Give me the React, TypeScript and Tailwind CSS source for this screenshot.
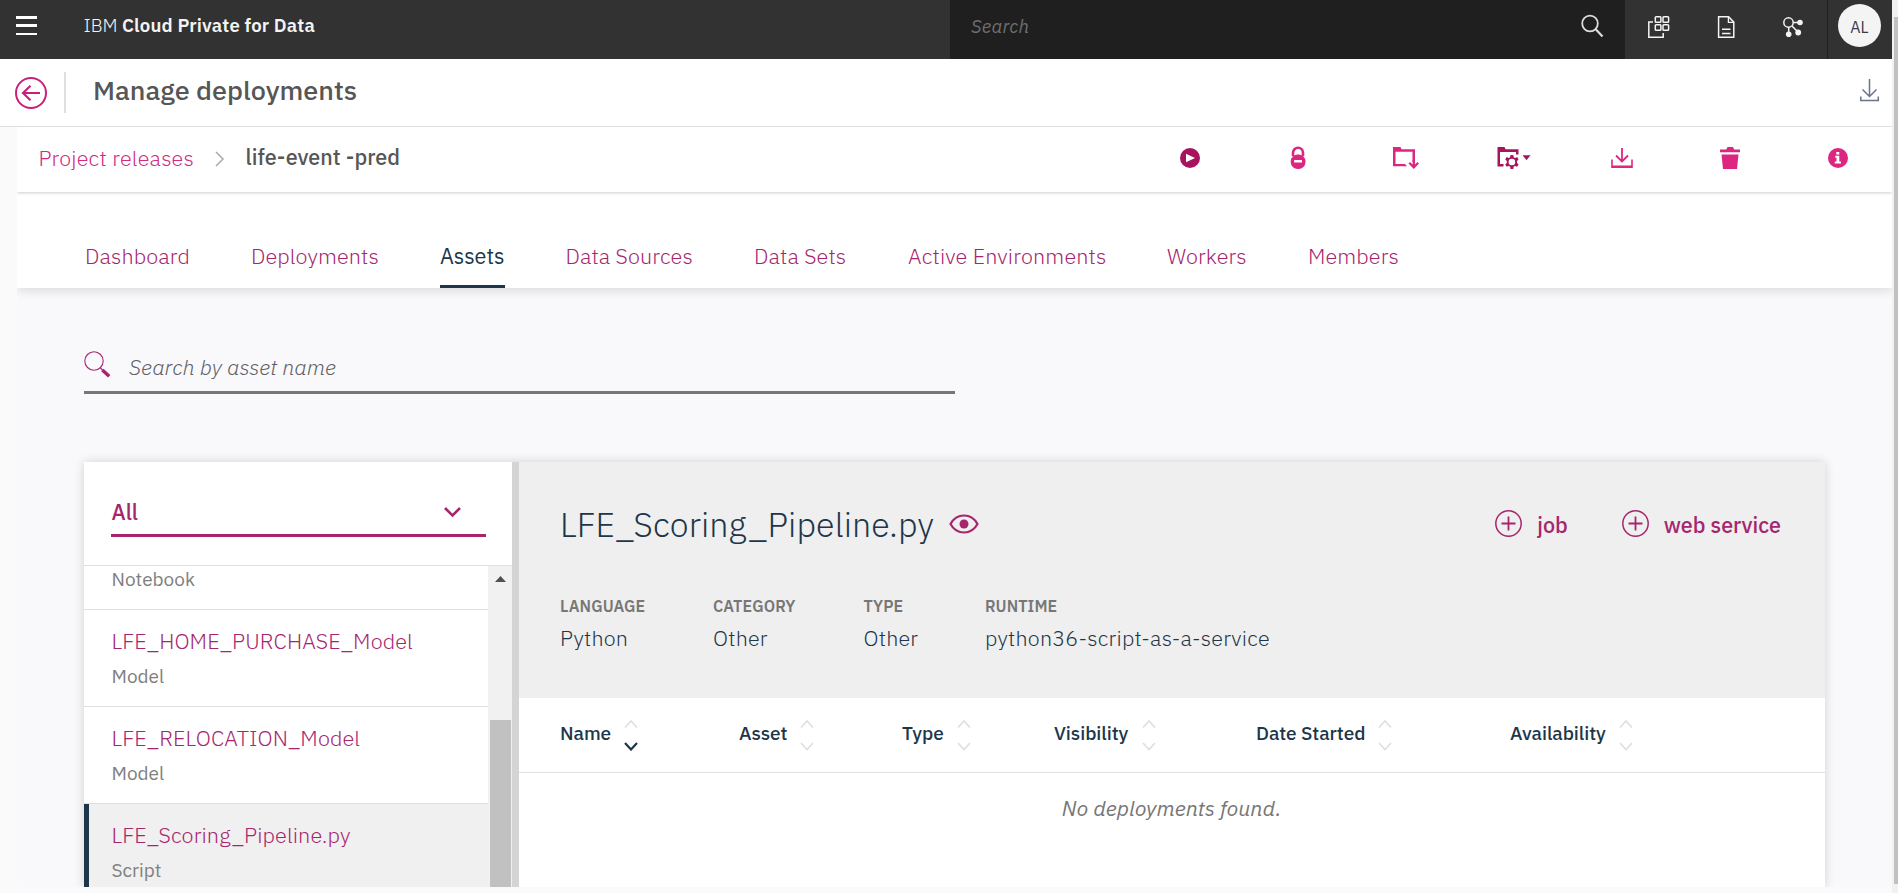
import React from "react";

const sans = "font-['IBM_Plex_Sans','Roboto',sans-serif]";

type TextSpec = { label: string; className: string };

const tabs: TextSpec[] = [
  { label: "Dashboard", className: "w-[105px] tracking-[0.1px]" },
  { label: "Deployments", className: "w-[128px] tracking-[0.1px]" },
  { label: "Assets", className: "w-[64.5px] tracking-[-0.05px]" },
  { label: "Data Sources", className: "w-[127.5px] tracking-[0.1px]" },
  { label: "Data Sets", className: "w-[93px] tracking-[0.12px]" },
  { label: "Active Environments", className: "w-[198px] tracking-[0.15px]" },
  { label: "Workers", className: "w-[80px] tracking-[0.1px]" },
  { label: "Members", className: "w-[91px] tracking-[0.1px]" },
];

const assets = [
  { name: "LFE_HOME_PURCHASE_Model", kind: "Model", active: false },
  { name: "LFE_RELOCATION_Model", kind: "Model", active: false },
  { name: "LFE_Scoring_Pipeline.py", kind: "Script", active: true },
];

const facts = [
  { label: "LANGUAGE", value: "Python", cell: "w-[153px]" },
  { label: "CATEGORY", value: "Other", cell: "w-[150.5px]" },
  { label: "TYPE", value: "Other", cell: "w-[121.5px]" },
  { label: "RUNTIME", value: "python36-script-as-a-service", cell: "w-[300px]" },
];

const columns = [
  { label: "Name", cell: "w-[179px]", text: "w-[51px]", sorted: true },
  { label: "Asset", cell: "w-[163px]", text: "w-[48px]", sorted: false },
  { label: "Type", cell: "w-[152px]", text: "w-[42px]", sorted: false },
  { label: "Visibility", cell: "w-[202px]", text: "w-[75px]", sorted: false },
  { label: "Date Started", cell: "w-[254px]", text: "w-[109px]", sorted: false },
  { label: "Availability", cell: "w-[180px]", text: "w-[96px]", sorted: false },
];

function MenuIcon() {
  return (
    <svg width="21" height="19" viewBox="0 0 21 19" fill="#fff" shapeRendering="crispEdges">
      <path d="M0 0h21v3H0zM0 8h21v3H0zM0 17h21v2H0z" />
    </svg>
  );
}

function HeaderIcon({ children }: { children: React.ReactNode }) {
  return (
    <div className="flex w-[67.5px] justify-center">
      <svg width="24" height="24" viewBox="0 0 24 24" fill="none" stroke="#f4f4f4" strokeWidth="1.5">
        {children}
      </svg>
    </div>
  );
}

function Header() {
  return (
    <header className="flex h-[59px] bg-[#323232]">
      <div className="flex w-[950px] items-start pl-4">
        <div className="pt-4">
          <MenuIcon />
        </div>
        <div className="ml-[46.5px] text-[18.6px] leading-[51px] text-[#f4f4f4]">
          <span className="font-light">IBM </span>
          <span className="font-semibold tracking-[0.18px]">Cloud Private for Data</span>
        </div>
      </div>
      <div className="flex w-[675px] items-start justify-between bg-[#1f1f1f] pl-[21px] pr-[21px]">
        <span className="text-[18.5px] font-normal italic leading-[52px] tracking-[0.2px] text-[#6f6f6f]">Search</span>
        <svg className="mt-[14px]" width="24" height="24" viewBox="0 0 24 24" fill="none" stroke="#dcdcdc" strokeWidth="1.8">
          <circle cx="10" cy="9.5" r="7.8" />
          <path d="M15.5 15l7 7.5" strokeWidth="2.2" />
        </svg>
      </div>
      <div className="flex w-[202px] pt-[15px]">
        <HeaderIcon>
          <rect x="8.3" y="1.8" width="5.6" height="5.4" rx="0.8" />
          <rect x="16" y="1.8" width="5.6" height="5.4" rx="0.8" />
          <rect x="8.3" y="9.8" width="5.6" height="5.4" rx="0.8" />
          <rect x="16" y="9.8" width="5.6" height="5.4" rx="0.8" />
          <path d="M6 7H1.8v15.3h14.4V18" />
        </HeaderIcon>
        <HeaderIcon>
          <path d="M4.6 1.8h10l5.2 5.3v15.2H4.6z" />
          <path d="M14.4 1.8v5.5h5.4" strokeWidth="1.3" />
          <path d="M8 14.3h8.5M8 18.4h8.5" />
        </HeaderIcon>
        <HeaderIcon>
          <circle cx="7.5" cy="7.5" r="4.7" />
          <path d="M12 7.5h6M7.7 12v6M11 11l5.5 5.5" />
          <circle cx="19" cy="7.5" r="2.8" fill="#f4f4f4" stroke="none" />
          <circle cx="7.7" cy="19.2" r="2.8" fill="#f4f4f4" stroke="none" />
          <circle cx="17.2" cy="17.5" r="2.9" fill="#f4f4f4" stroke="none" />
        </HeaderIcon>
      </div>
      <div className="flex w-[65px] items-start border-l border-[#1f1f1f] pl-[10px] pt-1">
        <div className="flex size-[43px] items-center justify-center rounded-full bg-[#f4f4f4] pt-[2px] text-[16px] text-[#3b3b4b]">
          AL
        </div>
      </div>
    </header>
  );
}

function TitleBar() {
  return (
    <div className="flex h-[68px] items-center border-b border-[#dfdfdf] bg-white pl-[15px] pr-[12px]">
      <svg width="32" height="34" viewBox="0 0 32 34" fill="none" stroke="#ca1f7b" strokeWidth="2">
        <circle cx="16" cy="17" r="15" />
        <path d="M25 17H8M15.5 9.7L8 17l7.5 7.3" strokeWidth="2.2" />
      </svg>
      <div className="ml-[17px] h-[41px] w-[2px] bg-[#dfdfdf]" />
      <h1 className="ml-[27px] pb-[5px] text-[27px] font-medium leading-[36px] text-[#565656]">Manage deployments</h1>
      <svg className="mb-[4px] ml-auto" width="21" height="23" viewBox="0 0 21 23" fill="none" stroke="#6b7389" strokeWidth="1.5">
        <path d="M10.5 0v17.5M3.5 10.5l7 7 7-7" />
        <path d="M1.8 17.5v4h17.500v-4" />
      </svg>
    </div>
  );
}

function ActionIcon({ children, width = 24, color = "#dc267f" }: { children: React.ReactNode; width?: number; color?: string }) {
  return (
    <div className="flex w-[108px] justify-center">
      <svg width={width} height="24" viewBox={`0 0 ${width} 24`} fill={color} stroke="none">
        {children}
      </svg>
    </div>
  );
}

function Breadcrumbs() {
  return (
    <div className="relative flex h-[65px] shrink-0 items-center justify-between bg-white pb-[3px] pl-[21.5px] shadow-[0_1px_3px_rgba(0,0,0,0.2)]">
      <div className="flex items-center pb-[1px] text-[21.5px] leading-[28px]">
        <a className="w-[156px] whitespace-nowrap font-light tracking-[0.2px] text-[#d12a80]">Project releases</a>
        <svg className="ml-[20px] mt-[3px]" width="10" height="16" viewBox="0 0 10 16" fill="none" stroke="#aaa" strokeWidth="1.5">
          <path d="M1 1l7 7-7 7" />
        </svg>
        <span className="-mt-[2px] ml-[21px] whitespace-nowrap font-medium tracking-[0.03px] text-[#565656]">life-event -pred</span>
      </div>
      <div className="flex">
        <ActionIcon color="#a6145f">
          <circle cx="12" cy="12" r="10" />
          <path d="M8 7.8v8.4l9-4.2z" fill="#fff" />
        </ActionIcon>
        <ActionIcon>
          <path d="M7 10V6.8a5 5 0 0 1 10 0V10" fill="none" stroke="#dc267f" strokeWidth="2.6" />
          <rect x="4.7" y="8.5" width="14.8" height="14.5" rx="7" />
          <rect x="8.2" y="14" width="7.8" height="2.5" fill="#fff" />
        </ActionIcon>
        <ActionIcon width={28}>
          <path d="M1 1h7.5l1 2.2H23V16h-2.5V5.7H3.5v12.2h9.5l2 2.3H1z" />
          <path d="M20.6 14h2.4v4.5l2.5-2.5 1.5 1.5-5.2 5.500-5.300-5.500 1.500-1.500 2.600 2.500z" />
        </ActionIcon>
        <ActionIcon width={34} color="#a6145f">
          <path d="M.5 1H7.5l1 2.200h13V8.500h-2.500V5.900H3v12h3.500v2.500h-6z" />
          <path fillRule="evenodd" d="M13.500 9h2.800l.4 2.300 1.400.7 2-.9 1.500 2.400-1.600 1.500v1.900l1.600 1.500-1.500 2.400-2-.9-1.400.7-.4 2.400h-2.800l-.4-2.400-1.400-.7-2 .9-1.500-2.400 1.600-1.500V15l-1.600-1.500 1.500-2.400 2 .9 1.400-.7zm1.400 3.700a3.300 3.300 0 1 0 0 6.600 3.300 3.300 0 0 0 0-6.600z" />
          <path d="M25.500 9.200h8l-4 5z" />
        </ActionIcon>
        <ActionIcon>
          <path d="M12 2v13.500M6 9.500l6 6 6-6" fill="none" stroke="#dc267f" strokeWidth="1.8" />
          <path d="M1.200 13.500h1.600v6h18.400v-6h1.600V22H1.200z" />
        </ActionIcon>
        <ActionIcon>
          <path d="M2 3.500h6.300L9.500 1h5.500l1.200 2.500H22v2.800H2zM3.500 8.500h17L19 23H5z" />
        </ActionIcon>
        <ActionIcon>
          <circle cx="12" cy="12" r="10" />
          <path d="M10.300 6h3v2.600h-3zM9.300 9.800h4v5.700h1.700v1.900H8.800v-1.900h1.700v-3.800H9.300z" fill="#fff" />
        </ActionIcon>
      </div>
    </div>
  );
}

function Tabs() {
  return (
    <nav className="flex h-[96px] shrink-0 gap-[61px] bg-white pl-[68px] pt-[48px] text-[21.6px] font-light shadow-[0_3px_10px_rgba(0,0,0,0.12)]">
      {tabs.map((tab) => (
        <a
          key={tab.label}
          className={`h-[48px] whitespace-nowrap leading-[32px] ${tab.className} ${
            tab.label === "Assets" ? "border-b-[3px] border-[#1d3649] font-normal text-[#1d3649]" : "text-[#a6266e]"
          }`}
        >
          {tab.label}
        </a>
      ))}
    </nav>
  );
}

function AssetSearch() {
  return (
    <div className="ml-[67px] mt-[58px] flex h-[48px] w-[871px] shrink-0 border-b-[3px] border-[#77777a]">
      <svg className="mt-[5px]" width="27" height="27" viewBox="0 0 27 27" fill="none" stroke="#a6266e">
        <circle cx="10" cy="10" r="9.2" strokeWidth="1.1" />
        <path d="M16.5 17l2 2" strokeWidth="1.3" />
        <path d="M18.3 19l6.9 6.2" strokeWidth="3.5" />
      </svg>
      <span className="ml-[18px] text-[21.5px] font-light italic leading-[42px] tracking-[0.06px] text-[#5f6064]">
        Search by asset name
      </span>
    </div>
  );
}

function AssetList() {
  return (
    <aside className="flex w-[435px] shrink-0 flex-col border-r-[7px] border-[#d4d4d4] bg-white">
      <div className="h-[104px] shrink-0 border-b border-[#dfdfdf] pl-[27px] pt-[36px]">
        <div className="flex h-[39px] w-[375px] justify-between border-b-[3px] border-[#a6266e] pr-[25px] text-[#a6266e]">
          <span className="pl-[0.5px] text-[21.5px] font-medium leading-[28px]">All</span>
          <svg className="mt-[8px]" width="17" height="12" viewBox="0 0 17 12" fill="none" stroke="#a6266e" strokeWidth="2.6">
            <path d="M1 2l7.5 7.5L16 2" />
          </svg>
        </div>
      </div>
      <div className="flex min-h-0 flex-1 overflow-hidden">
        <ul className="w-[404px]">
          <li className="h-[44px] border-b border-[#dfdfdf] pl-[27.5px] text-[19px] leading-[26px] text-[#808080]">Notebook</li>
          {assets.map((a) => (
            <li
              key={a.name}
              className={`h-[97px] border-b border-[#dfdfdf] pt-[16px] ${
                a.active ? "border-l-[5px] border-l-[#1d3649] bg-[#f0f0f0] pl-[22.5px]" : "pl-[27.5px]"
              }`}
            >
              <div className="whitespace-nowrap text-[21.7px] font-light leading-[31px] tracking-[0.08px] text-[#a6266e]">{a.name}</div>
              <div className="mt-[5px] text-[19px] leading-[28px] text-[#808080]">{a.kind}</div>
            </li>
          ))}
        </ul>
        <div className="flex w-[24px] flex-col items-center bg-[#f1f1f1]">
          <svg className="mt-[10px]" width="11" height="6" viewBox="0 0 11 6" fill="#505050">
            <path d="M0 6h11L5.5 0z" />
          </svg>
          <div className="mt-[138px] w-[21px] flex-1 bg-[#c1c1c1]" />
        </div>
      </div>
    </aside>
  );
}

function AddButton({ label }: { label: string }) {
  return (
    <button className="flex items-center text-[21.5px] font-medium leading-[28px] text-[#a6266e]">
      <svg className="mb-[2px] mr-[15px]" width="27" height="27" viewBox="0 0 27 27" fill="none" stroke="#a6266e" strokeWidth="1.5">
        <circle cx="13.5" cy="13.5" r="12.7" />
        <path d="M13.5 6.5v14M6.5 13.5h14" strokeWidth="1.8" />
      </svg>
      {label}
    </button>
  );
}

function SortArrows({ sorted }: { sorted: boolean }) {
  return (
    <svg width="14" height="32" viewBox="0 0 14 32" fill="none" strokeWidth="1.7">
      <path d="M1 8.5l6-6.5 6 6.5" stroke="#dfdfdf" />
      <path d="M1 24l6 6.5 6-6.5" stroke={sorted ? "#1d3649" : "#dfdfdf"} strokeWidth={sorted ? 2.2 : 1.7} />
    </svg>
  );
}

function AssetDetail() {
  return (
    <section className="flex flex-1 flex-col bg-white text-[#1d3649]">
      <div className="h-[236px] shrink-0 bg-[#efefef] pl-[41px] pr-[44px] pt-[40px]">
        <div className="flex h-[46px] items-center">
          <h2 className="w-[375px] whitespace-nowrap pb-[2px] text-[34px] font-light leading-[46px] tracking-[0.1px]">LFE_Scoring_Pipeline.py</h2>
          <svg className="mb-[2px] ml-[13.5px]" width="30" height="20" viewBox="0 0 30 20" fill="none" stroke="#a6266e" strokeWidth="2.2">
            <path d="M1.5 10C4.5 4.5 9.5 1.5 15 1.5S25.5 4.5 28.5 10C25.5 15.5 20.5 18.5 15 18.5S4.5 15.5 1.5 10z" />
            <circle cx="15" cy="10" r="4.5" fill="#a6266e" stroke="none" />
          </svg>
          <div className="ml-auto flex gap-[54px] pb-[1px]">
            <AddButton label="job" />
            <AddButton label="web service" />
          </div>
        </div>
        <dl className="mt-[46px] flex">
          {facts.map((f) => (
            <div key={f.label} className={f.cell}>
              <dt className="text-[16px] font-semibold leading-[24px] tracking-[0.1px] text-[#777]">{f.label}</dt>
              <dd className="mt-[6px] whitespace-nowrap text-[21.5px] font-light leading-[28px] tracking-[0.22px]">{f.value}</dd>
            </div>
          ))}
        </dl>
      </div>
      <div className="flex h-[75px] shrink-0 items-center border-b border-[#dfdfdf] pb-[1px] pl-[41px] text-[19px] font-medium">
        {columns.map((c) => (
          <div key={c.label} className={`flex items-center ${c.cell}`}>
            <span className={`whitespace-nowrap pb-[2px] tracking-[-0.05px] ${c.text}`}>{c.label}</span>
            <span className="ml-[13px]">
              <SortArrows sorted={c.sorted} />
            </span>
          </div>
        ))}
      </div>
      <p className="pr-[1px] pt-[18px] text-center text-[21.5px] italic leading-[34px] text-[#777]">No deployments found.</p>
    </section>
  );
}

export default function App() {
  return (
    <div className={`flex h-[893px] w-[1898px] overflow-hidden bg-[#fafafa] ${sans}`}>
      <div className="flex w-[1892px] flex-col">
        <Header />
        <TitleBar />
        <div className="flex h-[760px] flex-col pl-[17px]">
          <main className="flex flex-1 flex-col overflow-hidden bg-[#f9f9fc]">
            <Breadcrumbs />
            <Tabs />
            <AssetSearch />
            <div className="ml-[67px] mt-[68px] flex min-h-0 w-[1741px] flex-1 shadow-[0_0_10px_rgba(0,0,0,0.16)]">
              <AssetList />
              <AssetDetail />
            </div>
          </main>
        </div>
      </div>
      <div className="flex w-[6px] flex-col items-end bg-[#f1f1f1] pt-[17px]">
        <div className="h-[867px] w-1 bg-[#c1c1c1]" />
      </div>
    </div>
  );
}
